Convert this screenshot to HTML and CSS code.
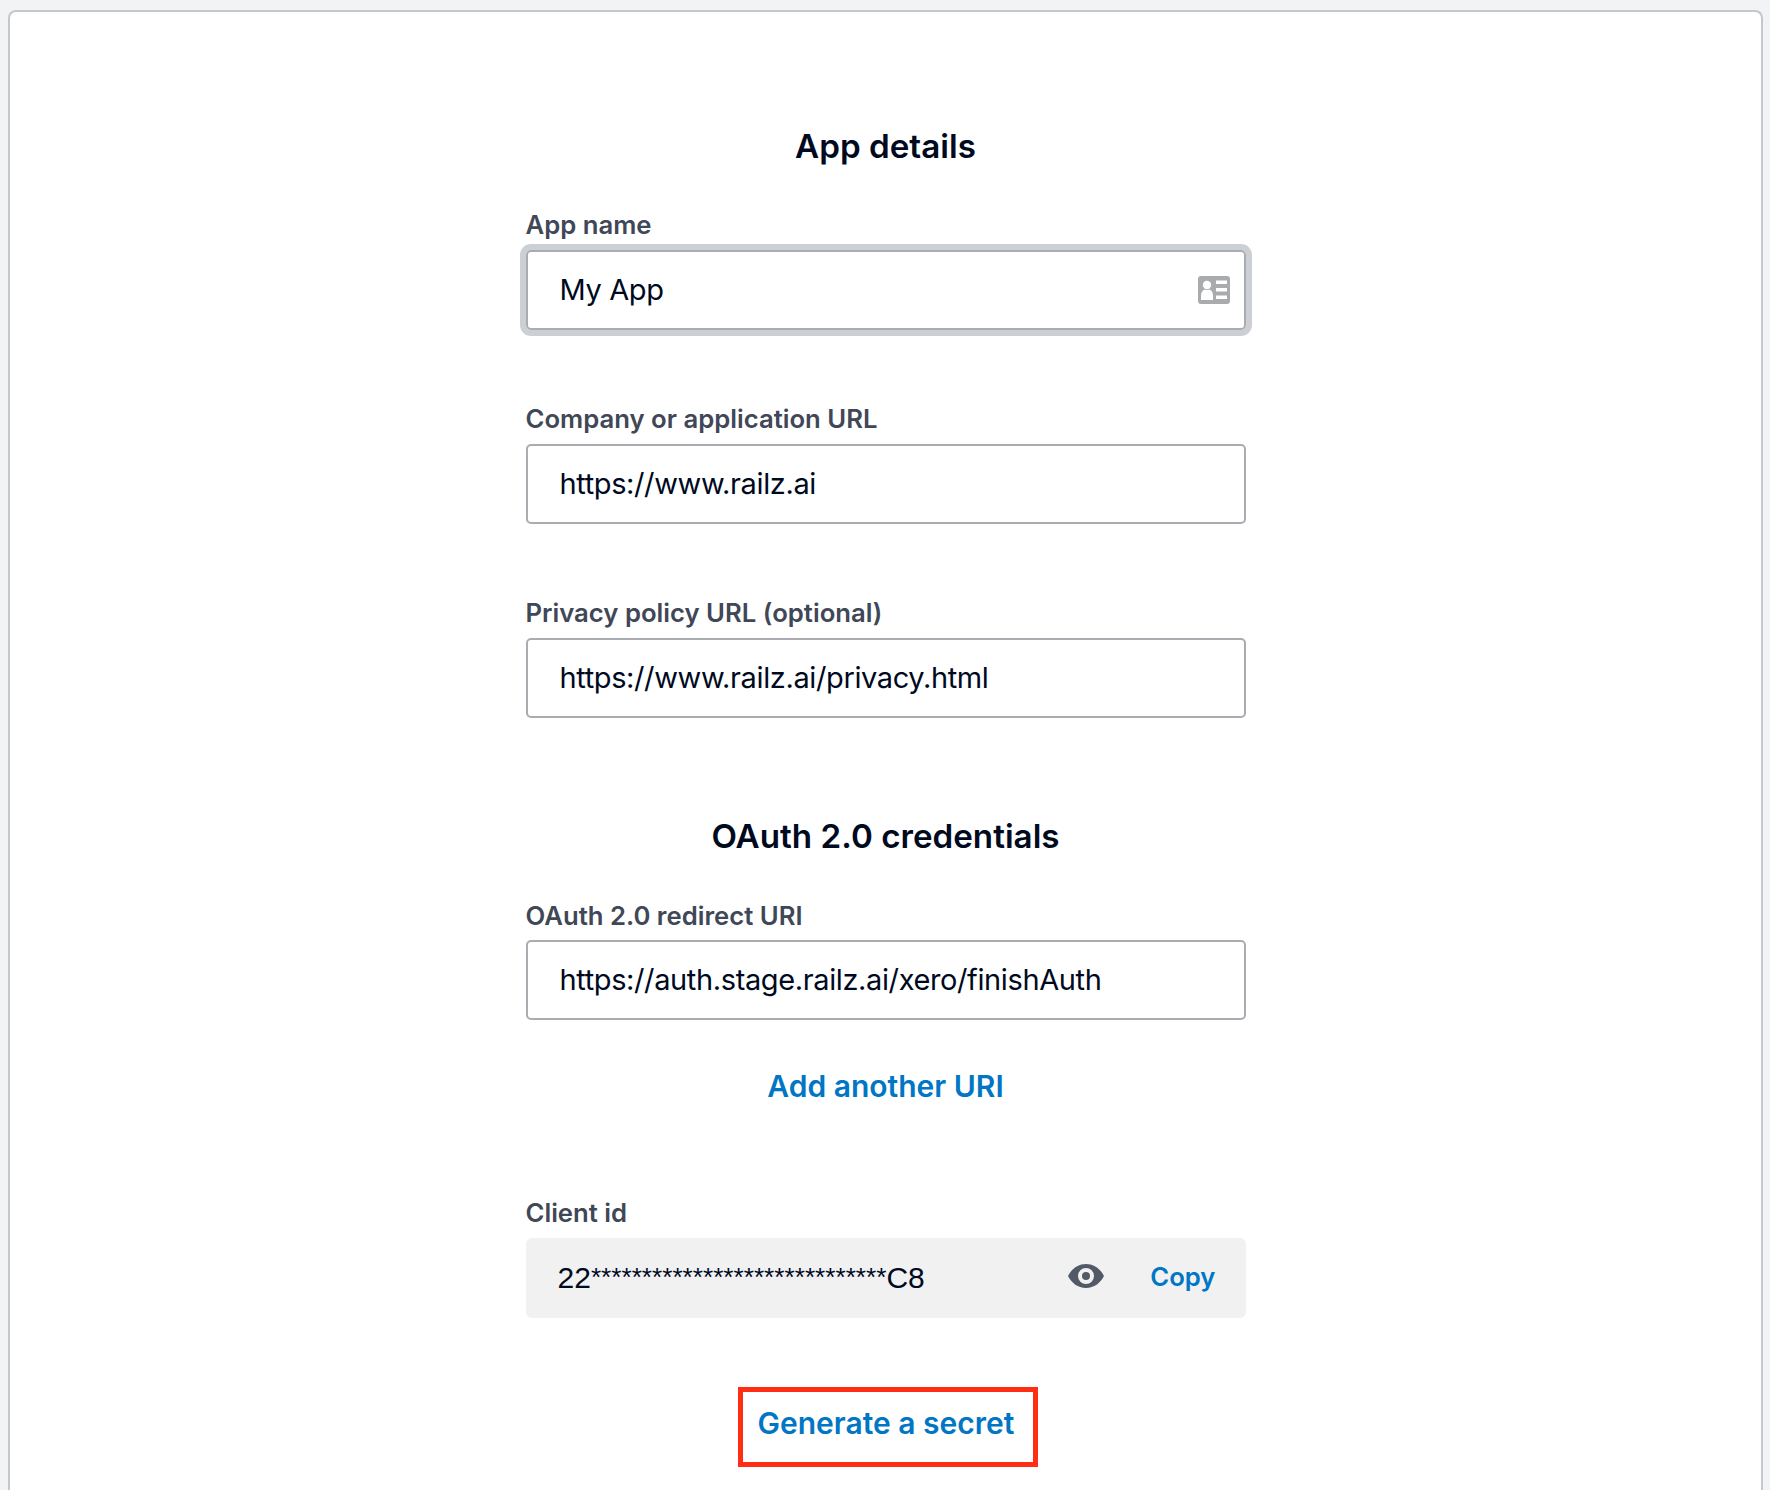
FILE: index.html
```html
<!DOCTYPE html>
<html lang="en">

<head>
  <meta charset="UTF-8">
  <title>App details</title>
  <link rel="stylesheet" href="styles.css">
</head>

<body>
  <div class="card">
    <div class="form">
      <h2 class="title">App details</h2>

      <div class="field">
        <div class="label">App name</div>
        <div class="input input-focus">
          <span>My App</span>
          <svg class="card-icon" width="32" height="28" viewBox="0 0 32 28">
            <rect x="0" y="0" width="32" height="28" rx="3" fill="#a9abae"/>
            <circle cx="9" cy="9" r="4.200" fill="#fff"/>
            <path d="M3 24v-4c0-4 2-6 3.500-6.500 1.500.8 3.500.8 5 0 1.500.5 3.500 2.500 3.500 6.500v4z" fill="#fff"/>
            <path d="M18 4.500h11v3.500H18zM18 12h11v3.500H18zM18 19.500h11V23H18z" fill="#fff"/>
          </svg>
        </div>
      </div>

      <div class="field">
        <div class="label">Company or application URL</div>
        <div class="input"><span>https://www.railz.ai</span></div>
      </div>

      <div class="field">
        <div class="label">Privacy policy URL (optional)</div>
        <div class="input"><span>https://www.railz.ai/privacy.html</span></div>
      </div>

      <h2 class="title title-oauth">OAuth 2.0 credentials</h2>

      <div class="field">
        <div class="label redirect-label">OAuth 2.0 redirect URI</div>
        <div class="input"><span>https://auth.stage.railz.ai/xero/finishAuth</span></div>
      </div>

      <div class="add-uri"><a href="#">Add another URI</a></div>

      <div class="field client-field">
        <div class="label">Client id</div>
        <div class="client-box">
          <span class="client-value">22<span class="stars">*****************************</span>C8</span>
          <svg class="eye-icon" width="36" height="24" viewBox="0 0 36 24">
            <path fill-rule="evenodd" d="M18 0C26 0 32.500 5 36 12 32.500 19 26 24 18 24S3.500 19 0 12C3.500 5 10 0 18 0zM18 4a8 8 0 1 0 0 16 8 8 0 0 0 0-16z" fill="#515a66"/>
            <circle cx="18" cy="12" r="4" fill="#515a66"/>
          </svg>
          <a class="copy" href="#">Copy</a>
        </div>
      </div>

      <div class="generate-row"><a class="generate" href="#">Generate a secret</a></div>
    </div>
  </div>
</body>

</html>
```

FILE: styles.css
```css
html,
body {
  height: 1490px;
  overflow: hidden;
}

body {
  margin: 0;
  padding: 10px 7px 0 8px;
  box-sizing: border-box;
  font-family: Inter, "Liberation Sans", sans-serif;
  background-color: #f2f3f5;
}

.card {
  height: 1480px;
  background: #fff;
  border: 2px solid #c4c7cc;
  border-bottom: 0;
  border-radius: 8px 8px 0 0;
  box-sizing: border-box;
  padding-top: 114px;
}

.form {
  width: 720px;
  margin: 0 auto;
}

.title {
  margin: 0;
  font-size: 33.2px;
  line-height: 40px;
  font-weight: 600;
  text-align: center;
  color: #000a1e;
}

.title-oauth {
  margin-top: 98px;
}

.field {
  margin-top: 43px;
}

.field + .field {
  margin-top: 73px;
}

.title-oauth + .field {
  margin-top: 44px;
}

.label {
  font-size: 25.7px;
  line-height: 32px;
  font-weight: 600;
  color: #404756;
  margin-bottom: 9px;
}

.redirect-label {
  margin-bottom: 8px;
}

.input {
  height: 80px;
  box-sizing: border-box;
  border: 2px solid #a9acb1;
  border-radius: 5px;
  padding: 0 14px 2px 32px;
  display: flex;
  align-items: center;
  justify-content: space-between;
  font-size: 29px;
  letter-spacing: -0.38px;
  color: #000a1e;
}

.input-focus {
  box-shadow: 0 0 0 6px #ccd0d5;
}

.card-icon {
  margin-bottom: -2px;
}

.add-uri {
  margin-top: 46px;
  text-align: center;
  font-size: 30px;
  line-height: 40px;
  font-weight: 600;
}

.add-uri a,
.copy,
.generate {
  color: #0076c4;
  text-decoration: none;
}

.client-field {
  margin-top: 91px;
}

.client-box {
  height: 80px;
  background: #f1f1f2;
  border-radius: 6px;
  padding: 0 30px 0 32px;
  display: flex;
  align-items: center;
  font-family: "Liberation Sans", Arial, sans-serif;
  font-size: 30px;
  color: #000a1e;
}

.client-value {
  flex: 1;
}

.stars {
  font-size: 26.2px;
  position: relative;
  top: -2px;
}

.eye-icon {
  margin: 0 46px 4px 0;
}

.copy {
  font-family: Inter, "Liberation Sans", sans-serif;
  font-size: 25.7px;
  font-weight: 600;
  margin-bottom: 4px;
}

.generate-row {
  margin-top: 69px;
  display: flex;
  justify-content: center;
}

.generate {
  display: block;
  box-sizing: border-box;
  width: 300px;
  height: 80px;
  margin-left: 4px;
  border: 5px solid #fe2d14;
  padding-left: 15px;
  font-size: 30px;
  line-height: 63px;
  font-weight: 600;
  white-space: nowrap;
}
```
